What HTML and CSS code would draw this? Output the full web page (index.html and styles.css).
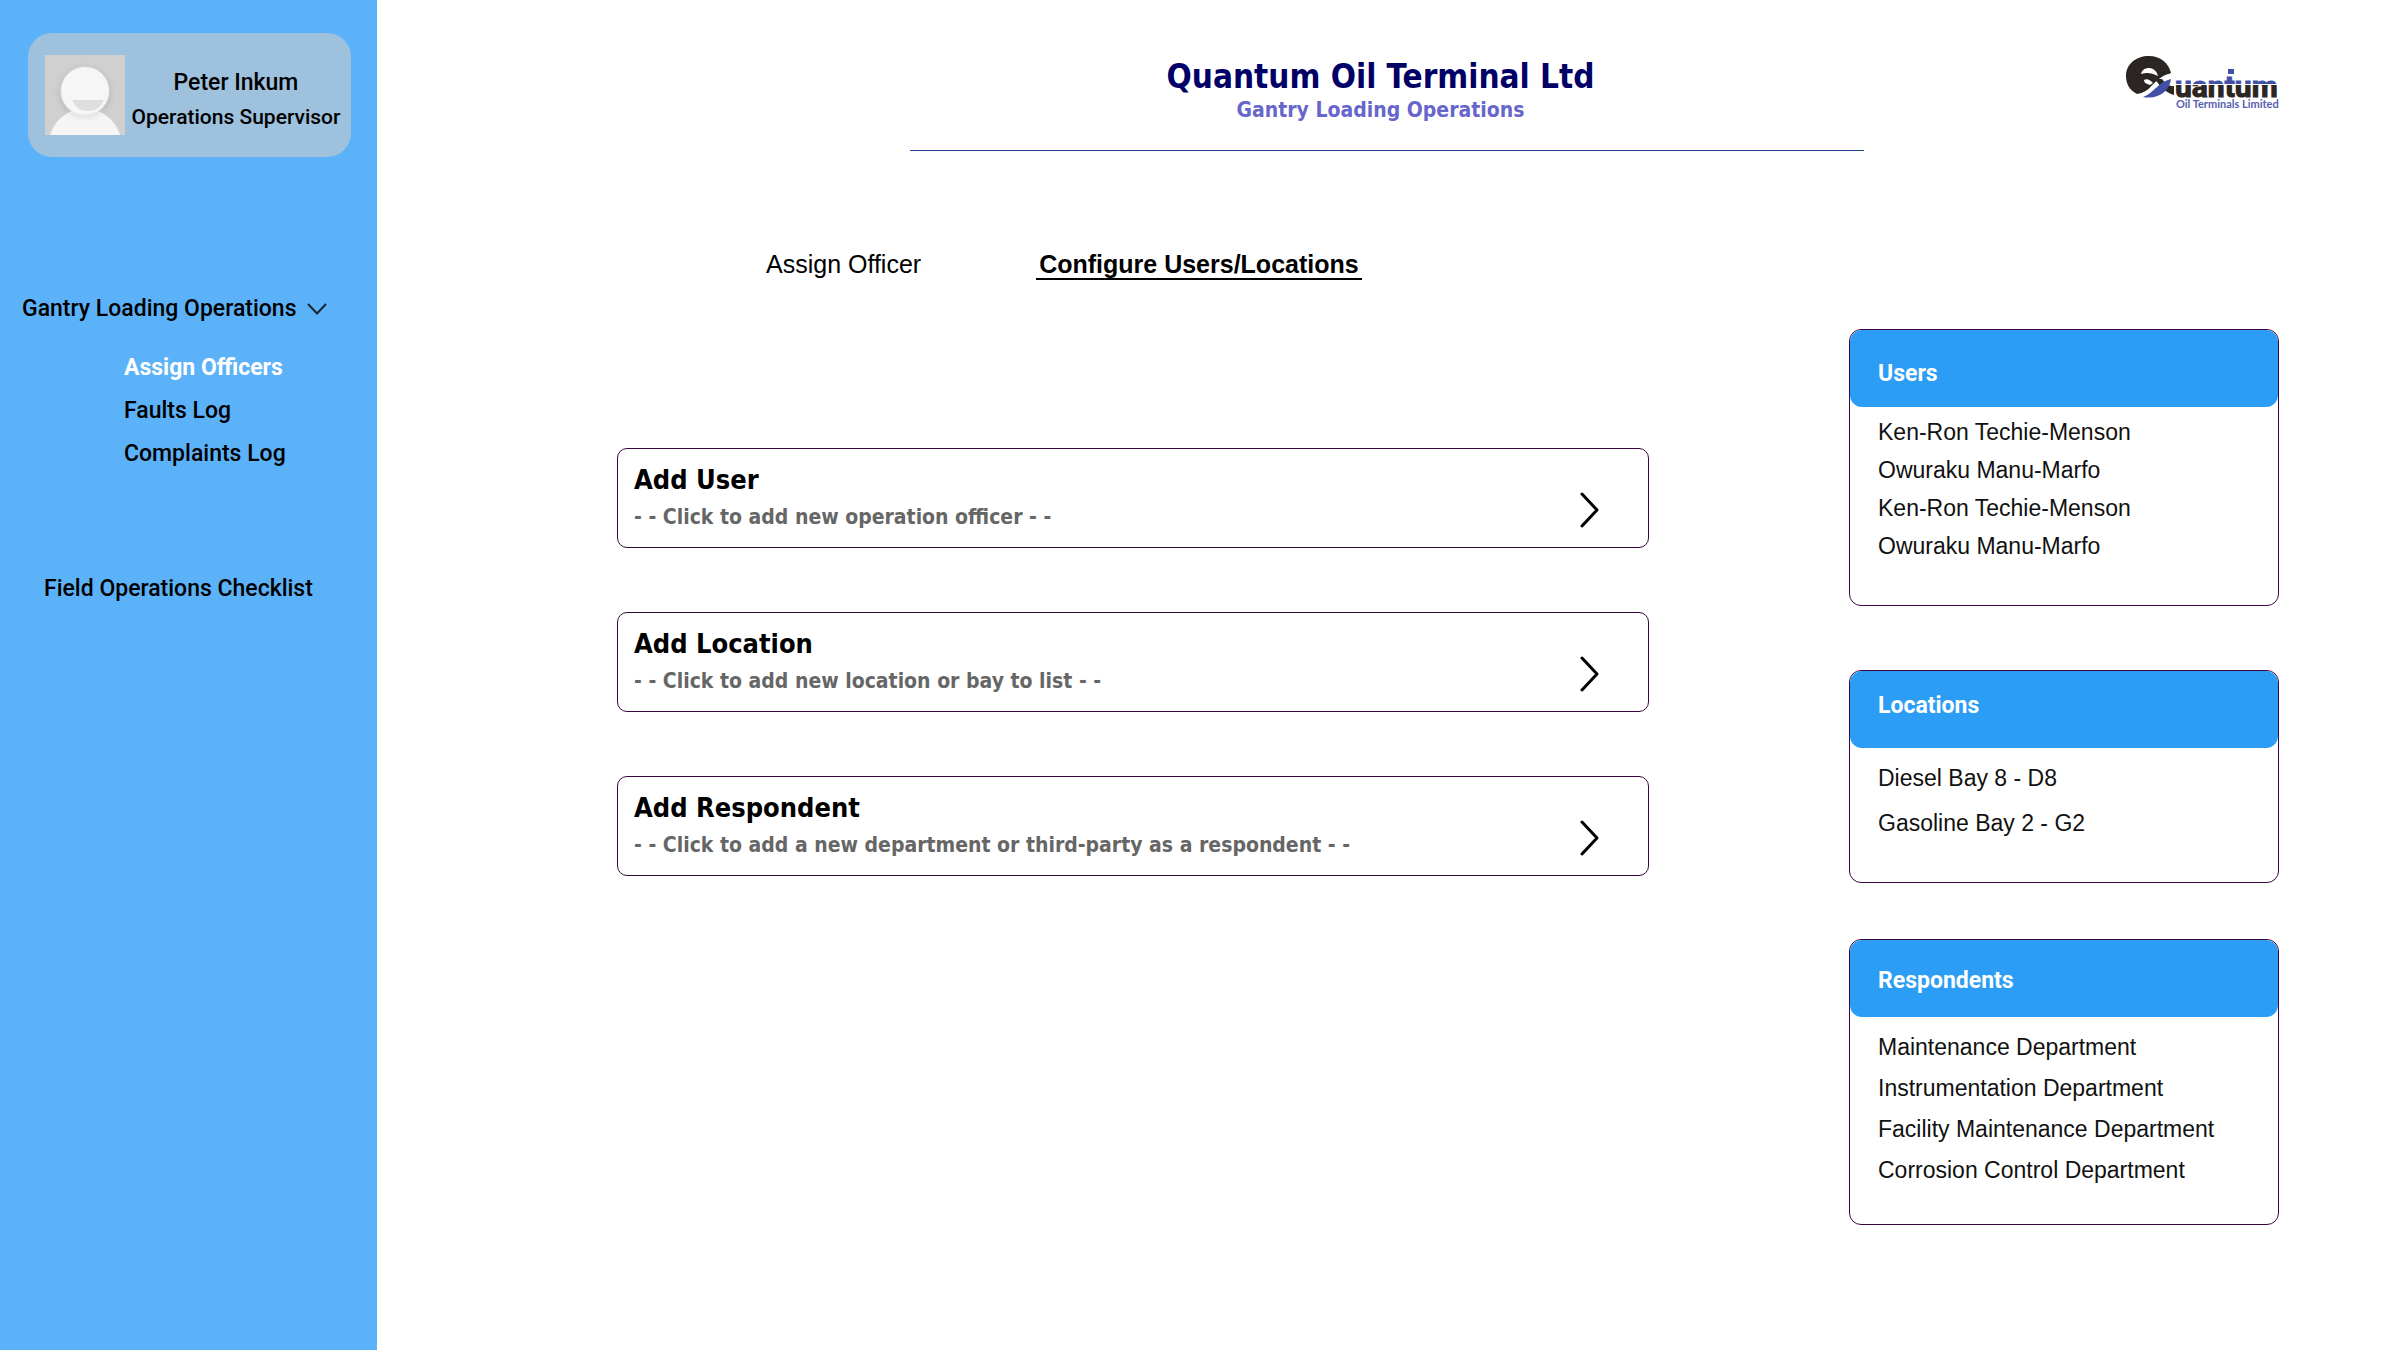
FILE: index.html
```html
<!DOCTYPE html>
<html lang="en">
<head>
  <meta charset="utf-8">
  <meta name="viewport" content="width=device-width, initial-scale=1">
  <title>Quantum Oil Terminal Ltd</title>
  <link rel="stylesheet" href="styles.css">
</head>
<body>
  <aside class="sidebar">
    <section class="profile">
      <svg class="avatar" viewBox="0 0 80 80" aria-hidden="true">
        <defs>
          <filter id="soft" x="-30%" y="-30%" width="160%" height="160%"><feGaussianBlur stdDeviation="3"/></filter>
        </defs>
        <rect width="80" height="80" fill="#d0d0d0"/>
        <circle cx="40" cy="38" r="26" fill="#bcbcbc" filter="url(#soft)"/>
        <path d="M5 80C10 65 22 54 40 54S70 65 75 80Z" fill="#f5f5f5"/>
        <ellipse cx="40" cy="56" rx="15" ry="6" fill="#dcdcdc" filter="url(#soft)"/>
        <circle cx="40" cy="36" r="24" fill="#f6f6f6" stroke="#ebebeb"/>
        <path d="M27 45H59C56 52 51 56 43 56S30 52 27 45Z" fill="#dedede"/>
      </svg>
      <div class="profile-text">
        <div class="profile-name">Peter Inkum</div>
        <div class="profile-role">Operations Supervisor</div>
      </div>
    </section>
    <nav class="nav" aria-label="Main">
      <button class="nav-group" type="button" aria-expanded="true">
        Gantry Loading Operations
        <svg class="nav-chevron" viewBox="0 0 20 12" aria-hidden="true"><path d="M1 1L10 10.500L19 1"/></svg>
      </button>
      <ul class="nav-sub">
        <li><a class="nav-current" href="#assign" aria-current="page">Assign Officers</a></li>
        <li><a href="#faults">Faults Log</a></li>
        <li><a href="#complaints">Complaints Log</a></li>
      </ul>
      <a class="nav-checklist" href="#checklist">Field Operations Checklist</a>
    </nav>
  </aside>

  <main class="main">
    <header class="header">
      <div class="heading">
        <h1>Quantum Oil Terminal Ltd</h1>
        <p>Gantry Loading Operations</p>
      </div>
      <svg class="logo" viewBox="0 0 154 56" role="img" aria-label="Quantum Oil Terminals Limited">
        <defs>
          <linearGradient id="band" gradientUnits="userSpaceOnUse" x1="0" y1="22" x2="0" y2="44">
            <stop offset="0.300" stop-color="#4150a6"/>
            <stop offset="0.300" stop-color="#fff"/>
            <stop offset="0.350" stop-color="#fff"/>
            <stop offset="0.350" stop-color="#2b2523"/>
          </linearGradient>
        </defs>
        <path d="M12 39C4 35 1 28 1 21C1 9 11 1 24 1C35 1 44 8 46 18C38 21 35 24 29 30C24 35 18 38 12 39Z" fill="#2b2523"/>
        <path d="M16 19C17 15 20 13 24 13C28 13 32 16 33 21C27 18 22 17 16 19Z" fill="#fff"/>
        <path d="M19 25C22 23 25 25 28 28L25 30C22 29 19 28 19 25Z" fill="#fff"/>
        <path d="M34 24C39 20 42 19 47 19C46 22 45 24 44 26C36 28 30 38 17 41L12 41C23 37 27 29 34 24Z" fill="#fff"/>
        <path d="M30 24C34 30 39 37 49 40V31C45 32 40 28 37 24Z" fill="#2b2523"/>
        <path d="M46 24C45 35 34 45 18 42C29 38 33 27 46 24Z" fill="#4150a6"/>
        <text class="logo-name" x="50" y="42" fill="url(#band)" stroke="url(#band)">uantum</text>
        <rect x="103" y="14" width="6" height="5" fill="#4150a6"/>
        <text class="logo-tag" x="51" y="53">Oil Terminals Limited</text>
      </svg>
    </header>

    <div class="content">
      <div class="work">
        <nav class="tabs" aria-label="Sections">
          <a class="tab" href="#assign-officer">Assign Officer</a>
          <a class="tab tab-active" href="#configure" aria-current="page">Configure Users/Locations</a>
        </nav>
        <div class="actions">
          <button class="action" type="button">
            <span class="action-text">
              <span class="action-title">Add User</span>
              <span class="action-hint">- - Click to add new operation officer - -</span>
            </span>
            <svg class="action-chevron" viewBox="0 0 20 42" aria-hidden="true"><path d="M2 5L17 21L2 37"/></svg>
          </button>
          <button class="action" type="button">
            <span class="action-text">
              <span class="action-title">Add Location</span>
              <span class="action-hint">- - Click to add new location or bay to list - -</span>
            </span>
            <svg class="action-chevron" viewBox="0 0 20 42" aria-hidden="true"><path d="M2 5L17 21L2 37"/></svg>
          </button>
          <button class="action" type="button">
            <span class="action-text">
              <span class="action-title">Add Respondent</span>
              <span class="action-hint">- - Click to add a new department or third-party as a respondent - -</span>
            </span>
            <svg class="action-chevron" viewBox="0 0 20 42" aria-hidden="true"><path d="M2 5L17 21L2 37"/></svg>
          </button>
        </div>
      </div>

      <div class="panels">
        <section class="panel panel-users">
          <h2>Users</h2>
          <ul>
            <li>Ken-Ron Techie-Menson</li>
            <li>Owuraku Manu-Marfo</li>
            <li>Ken-Ron Techie-Menson</li>
            <li>Owuraku Manu-Marfo</li>
          </ul>
        </section>
        <section class="panel panel-locations">
          <h2>Locations</h2>
          <ul>
            <li>Diesel Bay 8 - D8</li>
            <li>Gasoline Bay 2 - G2</li>
          </ul>
        </section>
        <section class="panel panel-respondents">
          <h2>Respondents</h2>
          <ul>
            <li>Maintenance Department</li>
            <li>Instrumentation Department</li>
            <li>Facility Maintenance Department</li>
            <li>Corrosion Control Department</li>
          </ul>
        </section>
      </div>
    </div>
  </main>
</body>
</html>
```
FILE: styles.css
```css
:root {
  --sky: #5cb2f9;
  --blue: #2b9df5;
  --plum: #3a0640;
  --heading: Tahoma, "DejaVu Sans Condensed", sans-serif;
  --ui: Roboto, sans-serif;
  --body: "Liberation Sans", Arial, sans-serif;
}

* { box-sizing: border-box; }

body {
  display: grid;
  grid-template-columns: 377px minmax(0, 1fr);
  min-height: 100vh;
  margin: 0;
  background: #fff;
  color: #000;
  font-family: var(--body);
}

h1, h2, p, ul { margin: 0; padding: 0; }
ul { list-style: none; }
a { color: inherit; text-decoration: none; }
button {
  padding: 0;
  border: 0;
  background: none;
  color: inherit;
  font: inherit;
  text-align: left;
  cursor: pointer;
}

/* Sidebar */
.sidebar {
  padding-top: 33px;
  background: var(--sky);
  font: 500 23px/28px var(--ui);
}

.profile {
  display: flex;
  align-items: center;
  margin: 0 26px 0 28px;
  padding: 22px 4px 22px 17px;
  border-radius: 24px;
  background: #9ec1de;
}

.avatar { flex: none; width: 80px; height: 80px; }

.profile-text {
  flex: 1;
  padding-top: 10px;
  line-height: 34px;
  text-align: center;
  white-space: nowrap;
}

.profile-role { font-size: 21px; }

.nav { margin-top: 138px; }

.nav-group {
  display: flex;
  align-items: center;
  gap: 10px;
  margin-left: 22px;
  white-space: nowrap;
}

.nav-chevron { width: 20px; height: 12px; }
.nav-chevron path { fill: none; stroke: #12283a; stroke-width: 2; }

.nav-sub {
  margin: 23px 0 100px;
  padding-left: 124px;
  line-height: 43px;
}

.nav-current { color: #fff; font-weight: 700; }
.nav-checklist { margin-left: 44px; }

/* Page header */
.main { padding: 55px 121px 60px 117px; }

.header {
  display: grid;
  grid-template-columns: 1fr minmax(0, 954px) 1fr;
}

.heading {
  grid-column: 2;
  padding: 2px 12px 27px 0;
  border-bottom: 1px solid #24408e;
  font-family: var(--heading);
  font-weight: 700;
  text-align: center;
}

.heading h1 { color: #000066; font-size: 33px; line-height: 40px; }
.heading p { color: #6666cc; font-size: 21px; line-height: 26px; }

.logo { justify-self: end; width: 154px; height: 56px; overflow: visible; }
.logo-name { font: 700 30px Roboto, sans-serif; stroke-width: 1px; }
.logo-tag { fill: #5560b0; font: 700 11px Lato, sans-serif; }

/* Work area */
.content {
  display: grid;
  grid-template-columns: minmax(0, 1032px) 430px;
  justify-content: space-between;
  padding: 98px 0 0 123px;
}

.tabs {
  display: flex;
  gap: 112px;
  padding-left: 146px;
  font-size: 25px;
  line-height: 28px;
}

.tab { padding: 1px 3px 0; border-bottom: 2px solid transparent; }
.tab-active { border-color: #000; font-weight: 700; }

.actions {
  display: grid;
  gap: 64px;
  margin-top: 168px;
}

.action {
  display: flex;
  align-items: flex-end;
  justify-content: space-between;
  padding: 15px 48px 16px 16px;
  border: 1px solid var(--plum);
  border-radius: 10px;
  font-family: var(--heading);
  font-weight: 700;
}

.action-text { display: grid; gap: 7px; }
.action-title { font-size: 27px; line-height: 32px; }
.action-hint { color: #666; font-size: 21px; line-height: 28px; }
.action-chevron { width: 20px; height: 42px; }
.action-chevron path { fill: none; stroke: #000; stroke-width: 3; stroke-linecap: round; stroke-linejoin: round; }

/* Side panels */
.panels {
  display: flex;
  flex-direction: column;
  gap: 56px;
  margin-top: 80px;
}

.panel {
  border: 1px solid var(--plum);
  border-radius: 12px;
  font-size: 23px;
}

.panel h2 {
  height: 77px;
  padding-left: 28px;
  border-radius: 12px;
  background: var(--blue);
  color: #fff;
  font: 700 23px/28px var(--ui);
}

.panel ul { padding-left: 28px; color: #111; }

.panel-users h2 { padding-top: 30px; }
.panel-users ul { padding-top: 6px; padding-bottom: 40px; line-height: 38px; }

.panel-locations { margin-top: 8px; }
.panel-locations h2 { padding-top: 21px; }
.panel-locations ul { padding-top: 8px; padding-bottom: 36px; line-height: 45px; }

.panel-respondents h2 { padding-top: 27px; }
.panel-respondents ul { padding-top: 10px; padding-bottom: 33px; line-height: 41px; }
```
